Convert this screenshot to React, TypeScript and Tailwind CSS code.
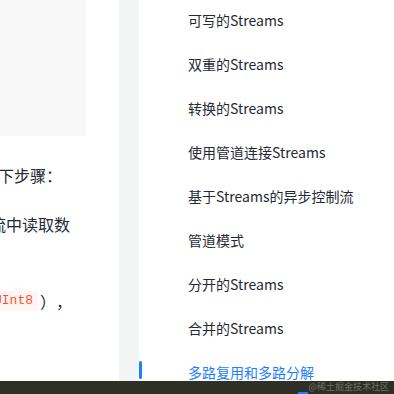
import React from "react";

const items = [
  "可写的Streams",
  "双重的Streams",
  "转换的Streams",
  "使用管道连接Streams",
  "基于Streams的异步控制流",
  "管道模式",
  "分开的Streams",
  "合并的Streams",
  "多路复用和多路分解",
];

export default function App() {
  const font = { fontFamily: '"Noto Sans CJK SC", "Noto Sans", sans-serif' };
  return (
    <div
      className="relative h-[394px] w-[394px] overflow-hidden bg-white flex [text-spacing-trim:space-all]"
      style={font}
    >
      <div className="w-[119px] shrink-0 overflow-hidden text-[16px] text-[#252933]">
        <div className="h-[136px] w-[86px] bg-[#f8f8f8]" />
        <div className="mt-[27px] ml-[-2px] leading-[24px] whitespace-nowrap">下步骤：</div>
        <div className="mt-[25px] ml-[-10px] leading-[24px] whitespace-nowrap">流中读取数</div>
        <div className="mt-[53px] ml-[-10px] leading-[24px] whitespace-nowrap flex items-center">
          <span
            className="bg-[#fff5f5] text-[#ff502c] text-[13px] leading-[20px] pl-[4px] pr-[5px] rounded-[2px]"
            style={{ fontFamily: '"Liberation Mono", monospace' }}
          >
            UInt8
          </span>
          <span className="ml-[2px] [text-spacing-trim:space-all]">），</span>
        </div>
      </div>
      <div className="w-[20px] shrink-0 bg-[#f3f4f4]" />
      <div className="flex-1 flex flex-col mt-[-2px]">
        {items.map((t, i) => {
          const active = i === items.length - 1;
          return (
            <div key={t} className="relative h-[44px] flex items-center pl-[49px]">
              {active && (
                <div className="absolute left-0 top-[11px] h-[18px] w-[3px] rounded-[2px] bg-[#1e80ff]" />
              )}
              <span
                className={
                  "text-[14px] leading-[22px] whitespace-nowrap " +
                  (active ? "text-[#1e80ff]" : "text-[#252933]")
                }
              >
                {t}
              </span>
            </div>
          );
        })}
      </div>
      <div className="absolute left-0 bottom-0 h-[13px] w-full bg-[#2e2f27] flex justify-end pr-[5px]">
        <span className="text-[9px] leading-[12px] text-[#6f7068] whitespace-nowrap">@稀土掘金技术社区</span>
      </div>
      <div className="absolute left-[298px] bottom-0 h-[2px] w-[10px] bg-[#1e80ff]" />
    </div>
  );
}
